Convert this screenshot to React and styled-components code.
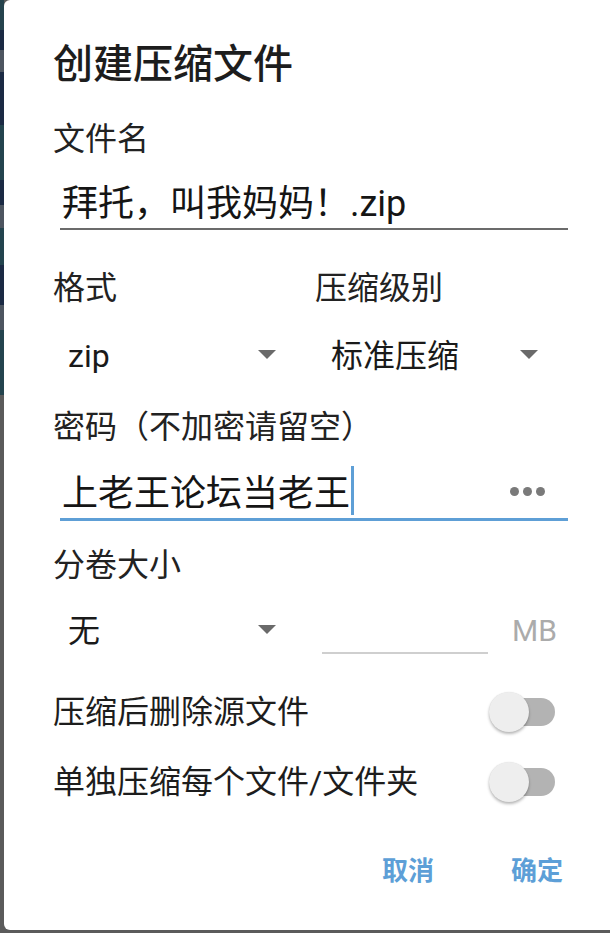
import React from 'react';
import styled, { createGlobalStyle } from 'styled-components';

const GlobalStyle = createGlobalStyle`
  html, body {
    margin: 0;
    padding: 0;
    background: #5b5b5b;
  }
  * {
    box-sizing: border-box;
  }
`;

const FONT = `Roboto, "Noto Sans CJK SC", sans-serif`;

const Page = styled.div`
  display: flex;
  align-items: flex-start;
  width: 610px;
  height: 933px;
  overflow: hidden;
  background: #5b5b5b;
  font-family: ${FONT};
`;

// 背景里露出来的一条应用界面
const Strip = styled.div`
  width: 4px;
  height: 395px;
  flex: none;
  background: linear-gradient(
    to bottom,
    #25434d 0 30px,
    #1b2a44 30px 50px,
    #4d5560 50px 72px,
    #1b2a44 72px 125px,
    #24444e 125px 180px,
    #1b2a44 180px 205px,
    #4d5560 205px 228px,
    #23444e 228px 265px,
    #1b2a44 265px 305px,
    #4d5560 305px 330px,
    #24444e 330px 395px
  );
`;

const Dialog = styled.div`
  flex: 1;
  height: 930px;
  background: #fff;
  border-radius: 6px 0 0 6px;
  padding: 40px 42px 0 49px;
  display: flex;
  flex-direction: column;
`;

const Title = styled.div`
  height: 50px;
  display: flex;
  align-items: center;
  font-size: 40px;
  line-height: 1;
  font-weight: 500;
  color: #1d1d1d;
`;

const Label = styled.div`
  height: 40px;
  margin-top: ${p => p.$mt || 0}px;
  padding-top: 4px;
  display: flex;
  align-items: center;
  font-size: 32px;
  line-height: 1;
  color: #222;
`;

const Field = styled.div`
  height: ${p => (p.$focused ? 60 : 58)}px;
  margin: ${p => p.$mt}px 0 0 7px;
  display: flex;
  align-items: center;
  padding: 8px 0 0 2px;
  border-bottom: ${p => (p.$focused ? '3px solid #5e9fd6' : '2px solid #6b6b6b')};
  font-size: 36px;
  line-height: 1;
  color: #151515;
`;

const Cursor = styled.span`
  width: 3px;
  height: 49px;
  margin: -6px 0 0 1px;
  background: #5e9fd6;
`;

const Dots = styled.div`
  margin: -4px 23px 0 auto;
  display: flex;
  gap: 4px;

  span {
    width: 9px;
    height: 9px;
    border-radius: 50%;
    background: #7a7a7a;
  }
`;

const Pair = styled.div`
  display: grid;
  grid-template-columns: 262px 1fr;
  margin-top: ${p => p.$mt || 0}px;
`;

const Select = styled.div`
  width: 223px;
  height: 48px;
  display: flex;
  align-items: center;
  padding: 4px 0 0 ${p => p.$pl || 15}px;
  font-size: 32px;
  line-height: 1;
  color: #1a1a1a;

  svg {
    margin: -3px 0 0 auto;
  }
`;

const VolumeRow = styled.div`
  height: 53px;
  margin-top: 18px;
  display: flex;
  align-items: center;

  ${Select} {
    padding-top: 6px;
  }
`;

const SizeInput = styled.div`
  width: 166px;
  height: 53px;
  margin-left: 46px;
  border-bottom: 2px solid #cfcfcf;
`;

const Unit = styled.div`
  margin: 6px 0 0 24px;
  font-size: 30px;
  line-height: 1;
  color: #ababab;
`;

const SwitchRow = styled.div`
  height: 70px;
  margin-top: ${p => p.$mt || 0}px;
  display: flex;
  align-items: center;
  justify-content: space-between;
  padding-right: 13px;
  font-size: 32px;
  line-height: 1;
  color: #1d1d1d;
`;

const Track = styled.div`
  position: relative;
  width: 48px;
  height: 28px;
  border-radius: 14px;
  background: #b3b3b3;
`;

const Thumb = styled.div`
  position: absolute;
  left: -18px;
  top: -6px;
  width: 40px;
  height: 40px;
  border-radius: 50%;
  background: #eeeeee;
  box-shadow: 0 2px 3px rgba(0, 0, 0, 0.28), 0 0 1px rgba(0, 0, 0, 0.12);
`;

const Actions = styled.div`
  height: 50px;
  margin-top: 29px;
  display: flex;
  align-items: center;
  justify-content: flex-end;
  gap: 77px;
  padding-right: 5px;
`;

const Button = styled.button`
  border: none;
  background: none;
  padding: 0;
  font-family: ${FONT};
  font-size: 26px;
  line-height: 1;
  font-weight: 700;
  color: #5d9fd7;
`;

const Arrow = () => (
  <svg width="18" height="9" viewBox="0 0 18 9">
    <path d="M0 0H18L9 9Z" fill="#6a6a6a" />
  </svg>
);

const Switch = () => (
  <Track>
    <Thumb />
  </Track>
);

export default function App() {
  return (
    <Page>
      <GlobalStyle />
      <Strip />
      <Dialog>
        <Title>创建压缩文件</Title>
        <Label $mt={27}>文件名</Label>
        <Field $mt={15}>拜托，叫我妈妈！.zip</Field>

        <Pair $mt={36}>
          <Label>格式</Label>
          <Label>压缩级别</Label>
        </Pair>
        <Pair $mt={24}>
          <Select $pl={15}>
            zip
            <Arrow />
          </Select>
          <Select $pl={16}>
            标准压缩
            <Arrow />
          </Select>
        </Pair>

        <Label $mt={27}>密码（不加密请留空）</Label>
        <Field $mt={16} $focused>
          上老王论坛当老王
          <Cursor />
          <Dots>
            <span />
            <span />
            <span />
          </Dots>
        </Field>

        <Label $mt={22}>分卷大小</Label>
        <VolumeRow>
          <Select $pl={15}>
            无
            <Arrow />
          </Select>
          <SizeInput />
          <Unit>MB</Unit>
        </VolumeRow>

        <SwitchRow $mt={23}>
          压缩后删除源文件
          <Switch />
        </SwitchRow>
        <SwitchRow>
          单独压缩每个文件/文件夹
          <Switch />
        </SwitchRow>

        <Actions>
          <Button>取消</Button>
          <Button>确定</Button>
        </Actions>
      </Dialog>
    </Page>
  );
}
